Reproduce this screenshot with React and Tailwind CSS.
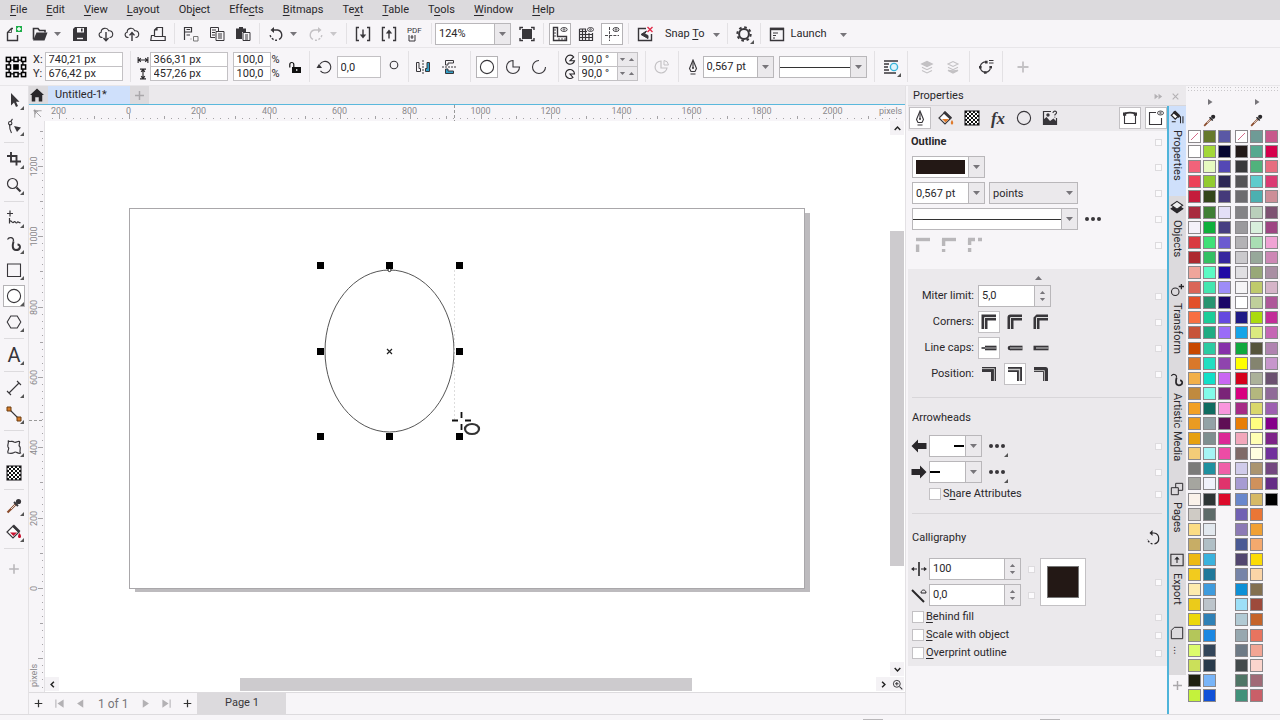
import { Fragment } from "react";
import clsx from "clsx";

const MENUS = [
  "_File", "_Edit", "_View", "_Layout", "Ob_ject", "Effe_cts",
  "_Bitmaps", "Te_xt", "_Table", "T_ools", "_Window", "_Help",
];

const PALETTE_ONE = [
  ["none", "#ffffff", "#f2637a", "#ec4258", "#c41c3b", "#a82c3e", "#f4f1f9", "#d93a40", "#ad2a30", "#efa59b", "#da6558", "#e2502a", "#f86f42", "#c7543a", "#c84800", "#d9782a", "#f2b04a", "#c08a3e", "#f2a024", "#e99b22", "#e6a010", "#f3cc78", "#7b7b7a", "#a5a59f", "#faf2ea", "#cfcbc5", "#fbdc85", "#c7ad66", "#edb913", "#f2cb1e", "#fdebae", "#ebcb1a", "#ecd80a", "#b4c65a", "#dcfb6c", "#cbe05a", "#1f2010", "#c4f23c"],
  ["#66792c", "#a3d739", "#e6fbc0", "#92cb30", "#33461a", "#3f7f35", "#0faf3c", "#3fe078", "#33c063", "#5cfac4", "#43e6b0", "#279470", "#1bcd98", "#20ab83", "#2bcba2", "#22dec2", "#13dfc8", "#82fbea", "#0f6b60", "#93a2a6", "#7f8f90", "#a6f5f5", "#1f909f", "#f0f2fb", "#2d3535", "#5d6b69", "#e2e8ee", "#b0bfc6", "#3bb2dd", "#20789a", "#3f9bdd", "#bcc4cb", "#2f80b6", "#1b87e2", "#33455a", "#293a4c", "#78b4f8", "#1050d8"],
  ["#5a58a5", "#040430", "#5448b5", "#2d2755", "#453a7a", "#e3dff6", "#463e82", "#6b5bd0", "#36279f", "#1f0ba5", "#9d8cf7", "#1b0668", "#6448e0", "#9a6cf7", "#8730aa", "#8f44ae", "#c966f2", "#7a2478", "#f996dd", "#5f0f55", "#dc2896", "#ec4ca5", "#f05fa8", "#e0336c", "#dc0a2a"],
];

const PALETTE_TWO = [
  ["none", "#231a19", "#39393b", "#555457", "#6d6c6f", "#848386", "#9b9a9d", "#b3b2b5", "#cac9cc", "#e0dfe2", "#f5f4f6", "#ffffff", "#1f1a85", "#14a4e8", "#10a83e", "#ffff00", "#d5001c", "#d8007f", "#a62a86", "#e87e06", "#f2a7bb", "#7f6a68", "#d0cbea", "#a69bd2", "#6987cc", "#7161b3", "#8c7ab5", "#4a5a94", "#52466f", "#7684a8", "#0e90d6", "#9ddff7", "#b2cad4", "#97a8b0", "#6e7a86", "#434a4c", "#4f7566", "#41917a"],
  ["#6f9b96", "#55a98f", "#51b27c", "#5fcbcc", "#4cb0b0", "#b9cfbb", "#d8efdc", "#a9deb3", "#97a89a", "#98a878", "#bfca6c", "#bfcf9b", "#aadb0f", "#dbea7f", "#56543c", "#84846f", "#acb19a", "#b4b77e", "#d9d76b", "#ffff80", "#ffffb3", "#ffffe0", "#aa9470", "#cf915c", "#d6b965", "#ea7636", "#f0a033", "#f4a96e", "#fbdb06", "#fbd5a7", "#837050", "#9d4a3b", "#c4642a", "#e8745f", "#f2a594", "#fbd5cd", "#a06a76", "#c95f68"],
  ["#c8588c", "#d5004c", "#e76d80", "#da3a73", "#cd8e98", "#7d5272", "#9e4482", "#efa2d4", "#cd87b5", "#a98ea3", "#d5b4c8", "#ae5799", "#c22d98", "#c566b4", "#b083b0", "#c796cc", "#6b5070", "#8f6a98", "#9d5fb0", "#85008a", "#7d2288", "#71309c", "#734680", "#642c85", "#000000"],
];

const checker = [];
for (let y = 0; y < 7; y++) {
  for (let x = 0; x < 7; x++) {
    if ((x + y) % 2 === 0) checker.push([x * 2 + 1, y * 2 + 1]);
  }
}

// All glyphs are drawn on a 16 x 16 box
const GLYPHS = {
  newDoc: (
    <>
      <path d="M7 2.5H5.5L1.5 6.5V14.5H11.5V9" />
      <path d="M5.5 3V6.5H2" strokeWidth="0.8" />
      <path d="M10 0H16V6H10Z" fill="#1fae4b" stroke="none" />
      <path d="M13 1V5M11 3H15" stroke="#fff" />
    </>
  ),
  open: (
    <>
      <path d="M1.5 13.5V2.5H6L7.5 4.5H13V6.5" strokeWidth="1.6" />
      <path d="M1 14.5L4.5 6.5H15.5L12.5 14.5Z" fill="currentColor" stroke="none" />
    </>
  ),
  save: (
    <>
      <path d="M3 1H15V15H1V3Z" fill="currentColor" stroke="none" />
      <path d="M5 2H12V6.5H5Z" fill="#f7f5f8" stroke="none" />
      <path d="M9 2.5H10.6V5.5H9Z" fill="currentColor" stroke="none" />
      <path d="M5 12.5H11" stroke="#f7f5f8" />
    </>
  ),
  cloudDown: (
    <>
      <path d="M4.5 11.5C0.5 11.5 0 6.8 3.2 6.3C3 1.8 9 .8 10.8 4.8C15.5 4 16.3 11.5 11.5 11.5" strokeWidth="1.1" />
      <path d="M8 6V14.5M5.5 12L8 14.8L10.5 12" />
    </>
  ),
  cloudUp: (
    <>
      <path d="M4.5 11.5C0.5 11.5 0 6.8 3.2 6.3C3 1.8 9 .8 10.8 4.8C15.5 4 16.3 11.5 11.5 11.5" strokeWidth="1.1" />
      <path d="M8 15V7M5.5 9.4L8 6.6L10.5 9.4" />
    </>
  ),
  print: <path d="M4.5 10.5V4L7 1.5H12.5V10.5M4.5 9.5H1.5L.8 14.5H15.2V10.5H4.5M7 1.5V4H4.5" strokeWidth="1.2" />,
  cut: (
    <>
      <path d="M1.5 14V1.5H8.5V6H1.5M3.5 3.5H7M3.5 9H7" strokeWidth="1.2" />
      <path d="M10.5 10.5H15V15H10.5ZM7.5 13H8.5" strokeWidth="1" stroke="#777" />
    </>
  ),
  copy: (
    <>
      <path d="M1.5 1.5H9.5V5M1.5 1.5V11.5H6M3 4H7M3 6.5H6M3 9H6" strokeWidth="1" />
      <path d="M7 5.5H15V14.5H7ZM9 8H13M9 10H13M9 12H13" strokeWidth="1" />
    </>
  ),
  paste: (
    <>
      <path d="M1 2.5H4V1H8V2.5H11V6H7V13H1Z" fill="currentColor" stroke="none" />
      <path d="M8 6.5H15V14.5H8ZM10 9H13M10 11H13M10 13H13" strokeWidth="1" />
    </>
  ),
  undo: (
    <>
      <path d="M4 4H9.5A5 5 0 0 1 11 13.4" />
      <path d="M9 14.2A6.5 6.5 0 0 1 2 8.5" strokeDasharray="2 1.5" />
      <path d="M6 1L2.5 4L6 7Z" fill="currentColor" stroke="none" />
    </>
  ),
  redo: (
    <>
      <path d="M12 4H6.5A5 5 0 0 0 5 13.4" />
      <path d="M7 14.2A6.5 6.5 0 0 0 14 8.5" strokeDasharray="2 1.5" />
      <path d="M10 1L13.5 4L10 7Z" fill="currentColor" stroke="none" />
    </>
  ),
  importIn: (
    <>
      <path d="M4 1.5H1.5V14.5H4M12 1.5H14.5V14.5H12M8 3.5V10" />
      <path d="M4.8 8.5H11.2L8 12.5Z" fill="currentColor" stroke="none" />
    </>
  ),
  exportOut: (
    <>
      <path d="M4 1.5H1.5V14.5H4M12 1.5H14.5V14.5H12M8 12.5V6" />
      <path d="M4.8 7.5H11.2L8 3.5Z" fill="currentColor" stroke="none" />
    </>
  ),
  pdf: (
    <>
      <text x="0" y="7" fontSize="8" fill="currentColor" stroke="none">PDF</text>
      <path d="M2 9V15H8V9M5 9V13M3.5 11H6.5" strokeWidth="1" />
    </>
  ),
  fullScreen: (
    <>
      <path d="M3 3H13V13H3Z" fill="currentColor" stroke="none" />
      <path d="M1 4V1.5H4M12 1.5H15V4M1 12V14.5H4M12 14.5H15V12" />
    </>
  ),
  rulers: (
    <>
      <path d="M1.5 1.5H5.5V10.5H14.5V14.5H1.5Z" />
      <path d="M2 4H4M2 7H4M2 10H4M7 14V12M10 14V12M13 14V12" strokeWidth="0.9" />
      <ellipse cx="12" cy="3.5" rx="3.2" ry="2" strokeWidth="0.9" />
      <circle cx="12" cy="3.5" r="0.8" strokeWidth="0.8" />
    </>
  ),
  grid: (
    <>
      <path d="M1.5 3V14.5H14.5V7M1.5 3H8M1.5 5.5H9M1.5 8.5H14.5M1.5 11.5H14.5M4.5 3V14.5M7.5 3V14.5M11 7V14.5" strokeWidth="1.2" />
      <ellipse cx="12.5" cy="3.5" rx="3" ry="2" strokeWidth="0.9" />
      <circle cx="12.5" cy="3.5" r="0.8" strokeWidth="0.8" />
    </>
  ),
  guides: (
    <>
      <path d="M5.5 1V15M1 9.5H15" strokeWidth="0.9" strokeDasharray="3 1.2" />
      <ellipse cx="12" cy="3.5" rx="3" ry="2" strokeWidth="0.9" />
      <circle cx="12" cy="3.5" r="0.8" strokeWidth="0.8" />
    </>
  ),
  snapOff: (
    <>
      <path d="M9 2.5H1.5V14.5H14.5V8" />
      <path d="M9.5 5L4 8.5L11 12.5V9.5L7.5 8Z" fill="currentColor" strokeWidth="1" />
      <path d="M10.5 1L15.5 6M15.5 1L10.5 6" stroke="#e02c4a" />
    </>
  ),
  gear: (
    <>
      <circle cx="8" cy="8" r="4.9" strokeWidth="2" />
      <circle cx="8" cy="8" r="6.7" strokeWidth="2" strokeDasharray="2.6 2.66" />
    </>
  ),
  launch: (
    <>
      <path d="M1.5 2.5H14.5V14.5H1.5Z" />
      <path d="M1 3H15" strokeWidth="2.4" />
      <path d="M4 7H9M4 9.5H7M4 12H6" strokeWidth="1" />
    </>
  ),
  origin: (
    <>
      <path d="M3 3H13V13H3Z" strokeWidth="1" />
      <g fill="#f7f5f8" strokeWidth="1.1">
        {[1, 6.5, 12].map((y) =>
          [1, 6.5, 12].map((x) => (
            <rect key={`${x}-${y}`} x={x} y={y} width="3" height="3" fill={x === 6.5 && y === 6.5 ? "#000" : undefined} />
          ))
        )}
      </g>
    </>
  ),
  unlock: (
    <>
      <path d="M5 8H14V14H5Z" fill="#111" stroke="none" />
      <path d="M2.8 8.5V5.5A2 2 0 0 1 6.8 5.5V8" stroke="#111" strokeWidth="1.2" />
      <path d="M9 11H10.4" stroke="#fff" />
    </>
  ),
  rotate: (
    <>
      <path d="M4 5.2A5.8 5.8 0 1 1 4.5 11.8" strokeWidth="1.1" />
      <path d="M.5 9H6L3 4.8Z" fill="currentColor" stroke="none" />
    </>
  ),
  degree: <circle cx="8" cy="6" r="3.8" strokeWidth="1.1" />,
  mirrorH: (
    <>
      <path d="M1.5 3.5V12.5H5.5V9.5H4V3.5Z" strokeWidth="1" />
      <path d="M14.5 3.5V12.5H10.5V9.5H12V3.5Z" fill="#35a0c8" strokeWidth="1" />
      <path d="M8 1V15" strokeWidth="1" strokeDasharray="2 1" />
    </>
  ),
  mirrorV: (
    <>
      <path d="M12.5 1.5H4.5V6H7V4H12.5Z" strokeWidth="1" />
      <path d="M12.5 14.5H4.5V10H7V12H12.5Z" fill="#35a0c8" strokeWidth="1" />
      <path d="M1 8H15" strokeWidth="1" strokeDasharray="2 1" />
    </>
  ),
  circle: <circle cx="8" cy="8" r="6.6" strokeWidth="1.1" />,
  pie: <path d="M8 1.5A6.5 6.5 0 1 0 14.5 8H8Z" strokeWidth="1.1" />,
  arc: <path d="M8 1.5A6.5 6.5 0 1 0 14.5 8" strokeWidth="1.1" />,
  pieStart: <path d="M13 4A6 6 0 1 0 14 9H8Z" strokeWidth="1.5" />,
  pieEnd: <path d="M14 8A6 6 0 1 0 12 12.5L8 8Z" strokeWidth="1.5" />,
  swap: (
    <>
      <path d="M7 2A6 6 0 1 0 13 9H7Z" strokeWidth="1.2" />
      <path d="M10 1.5A5 5 0 0 1 14.5 6H10Z" strokeWidth="1" />
    </>
  ),
  nib: (
    <>
      <path d="M8 1L11.5 9.5L10 12.5H6L4.5 9.5Z" strokeWidth="1.1" />
      <path d="M8 2V9M5.5 15H10.5" strokeWidth="1.1" />
      <circle cx="8" cy="9" r="1" fill="currentColor" stroke="none" />
    </>
  ),
  wrap: (
    <>
      <path d="M1 2H15M1 5H6M1 8H5M1 11H6M1 14H13" strokeWidth="1.3" />
      <circle cx="11" cy="8" r="3.6" stroke="#39b4da" fill="#dff4fb" />
    </>
  ),
  toFront: (
    <>
      <path d="M3 5L8 2.5L13 5L8 7.5Z" fill="currentColor" />
      <path d="M3 8.2L8 10.7L13 8.2M3 11.4L8 13.9L13 11.4" strokeWidth="1.1" />
    </>
  ),
  toBack: (
    <>
      <path d="M3 5L8 2.5L13 5L8 7.5ZM3 8.2L8 10.7L13 8.2" strokeWidth="1.1" />
      <path d="M3 11.4L8 12L13 11.4L8 13.9Z" fill="currentColor" />
    </>
  ),
  toCurves: (
    <>
      <path d="M8.5 3A5.2 5.2 0 1 0 12.4 9.6" strokeWidth="1.2" />
      <path d="M7 1.8H9.6V4.4H7ZM1 7H3.6V9.6H1ZM6 12.2H8.6V14.8H6ZM11.4 7H14V9.6H11.4Z" fill="currentColor" stroke="none" />
      <path d="M11 1.5H15.5M11 4H15.5" strokeWidth="1" />
    </>
  ),
  plus: <path d="M8 2.5V13.5M2.5 8H13.5" strokeWidth="1.8" />,
  pick: <path d="M5 1V13.5L8 10.5L10 15L12 14L10 9.8H13.5Z" fill="currentColor" stroke="none" />,
  shape: (
    <>
      <path d="M6.5 1C2.5 5 3 10 5.5 15" strokeWidth="1.1" />
      <circle cx="4.2" cy="5.2" r="1.7" strokeWidth="1.1" fill="#f7f5f8" />
      <path d="M8 8L15 9.5L11 14Z" fill="currentColor" stroke="none" />
    </>
  ),
  crop: <path d="M1 5H10.5V14.5M5 1V10.5H15" strokeWidth="1.9" />,
  zoom: (
    <>
      <circle cx="6.5" cy="6.5" r="5" strokeWidth="1.2" />
      <path d="M10.5 10.5L14.5 14.5" strokeWidth="2.2" />
    </>
  ),
  freehand: <path d="M4 .5V6.5M1 3.5H7M3.5 8V13.5M3.5 11C6 10 6 14 8 12C9 10 10 15 11.5 12C12.5 11 13 13.5 14.5 12.5" strokeWidth="1.2" />,
  artistic: (
    <>
      <path d="M1.5 3.5C3 .5 8 1 7.5 5.5" strokeWidth="1.2" />
      <path d="M7.5 5.5C6.5 9 6 14 10 14C15 14 15 8.5 11.5 8.5" strokeWidth="2" />
    </>
  ),
  rect: <path d="M1.5 2H14.5V14.5H1.5Z" strokeWidth="1.1" />,
  polygon: <path d="M4.8 2H11.2L14.8 8L11.2 14H4.8L1.2 8Z" strokeWidth="1.1" />,
  dimension: <path d="M3 13L13 3M1 11L5 15M11 1L15 5" strokeWidth="1.1" />,
  connector: (
    <>
      <path d="M3 3L13 13" strokeWidth="1.1" />
      <path d="M1 1H5V5H1ZM11 11H15V15H11Z" fill="#d77c28" stroke="#6b3c12" strokeWidth="1" />
    </>
  ),
  envelope: (
    <path d="M2 1.5C4 4 6 1 8 3C10 4.5 12 1.5 13.5 2.5C14.5 4 11.5 6 14 8C15 10 13 12 14.5 14C12 15.5 10 11.5 8 13.5C6 15 4 14.5 2 14C.8 11 4.5 10 2 8C1 5 3.5 4 2 1.5Z" strokeWidth="1.2" />
  ),
  checker: (
    <>
      <rect x="1" y="1" width="14" height="14" fill="#fff" strokeWidth="1.2" />
      {checker.map(([x, y]) => (
        <rect key={`${x}-${y}`} x={x} y={y} width="2" height="2" fill="#111" stroke="none" />
      ))}
    </>
  ),
  dropper: (
    <>
      <path d="M10 6L3.5 12.5L1.5 14.5" stroke="#8a4a2a" strokeWidth="2.2" />
      <path d="M9.5 6.5L5 11" stroke="#ddd" strokeWidth="1" />
      <path d="M8 4L12 8" strokeWidth="2" />
      <circle cx="12.5" cy="3.5" r="2.6" fill="currentColor" stroke="none" />
    </>
  ),
  smartFill: (
    <>
      <path d="M7 2L13 8L7 14L1 8Z" strokeWidth="1.2" fill="#fff" />
      <path d="M7 1.5L13.5 8" strokeWidth="2.6" />
      <path d="M4 8.5H11L7.5 12Z" fill="#c8102e" stroke="none" />
      <path d="M13.5 9C15.5 11.5 15.5 14 13.5 14C11.5 14 11.5 11.5 13.5 9Z" fill="#c8102e" stroke="none" />
    </>
  ),
  fill: (
    <>
      <path d="M7 2L13 8L7 14L1 8Z" strokeWidth="1.2" fill="#fff" />
      <path d="M6 2L13 8.5" strokeWidth="2.8" />
      <path d="M4 9H11L7.5 12.5Z" fill="#e07b2c" stroke="none" />
      <path d="M14 10C15.6 12 15.6 14.5 14 14.5C12.4 14.5 12.4 12 14 10Z" fill="#e07b2c" stroke="none" />
    </>
  ),
  bitmap: (
    <>
      <path d="M9 1.5H1.5V14.5H14.5V8" strokeWidth="1.2" />
      <path d="M1 15V10L4.5 7L8 11L11.5 8.5L15 12V15Z" fill="currentColor" stroke="none" />
      <circle cx="6" cy="5" r="1" fill="currentColor" />
      <path d="M11 3C11 .5 15 .5 14.5 3C14.3 4.2 12.8 4 12.8 5.5M12.8 6.7V7.5" strokeWidth="1.1" />
    </>
  ),
  frame: (
    <>
      <path d="M2.5 5V13.5H13.5V5" strokeWidth="1.1" />
      <path d="M3 3.4C5.5 2.6 10.5 2.6 13 3.4" strokeWidth="1.8" />
      <path d="M1 2.5H4.2V5.7H1ZM11.8 2.5H15V5.7H11.8Z" fill="currentColor" stroke="none" />
    </>
  ),
  autoView: (
    <>
      <path d="M8 2.5H1.5V14.5H13.5V8" strokeWidth="1.1" />
      <ellipse cx="12.5" cy="3" rx="3" ry="2" strokeWidth="0.9" />
      <circle cx="12.5" cy="3" r="0.8" strokeWidth="0.8" />
    </>
  ),
  ghostA: (
    <>
      <path d="M1 2.5H15" strokeWidth="3.4" />
      <path d="M2.6 7.5V15" strokeWidth="3.4" />
    </>
  ),
  ghostB: (
    <>
      <path d="M1 2.5H15" strokeWidth="3.4" />
      <path d="M2.6 2V9M2.6 12V15" strokeWidth="3.4" />
    </>
  ),
  ghostC: (
    <>
      <path d="M1 2.5H8M11 2.5H15" strokeWidth="3.4" />
      <path d="M2.6 2V8M2.6 11V15" strokeWidth="3.4" />
    </>
  ),
  cornerMiter: (
    <>
      <path d="M3.5 15V3.5H15" strokeWidth="6" />
      <path d="M3.5 15V3.5H15" stroke="#ddd" strokeWidth="1" />
    </>
  ),
  cornerRound: (
    <>
      <path d="M3.5 15V3.5H15" strokeWidth="6" strokeLinejoin="round" />
      <path d="M3.5 15V3.5H15" stroke="#ddd" strokeWidth="1" />
    </>
  ),
  cornerBevel: (
    <>
      <path d="M3.5 15V3.5H15" strokeWidth="6" strokeLinejoin="bevel" />
      <path d="M3.5 15V3.5H15" stroke="#ddd" strokeWidth="1" />
    </>
  ),
  capButt: (
    <>
      <path d="M4 8H15.5" strokeWidth="4.6" />
      <path d="M.5 8H4" strokeWidth="1.6" />
      <path d="M4 8H15.5" stroke="#bbb" strokeWidth="1" />
    </>
  ),
  capRound: (
    <>
      <path d="M3 8H15.5" strokeWidth="4.6" />
      <circle cx="3" cy="8" r="2.3" fill="currentColor" stroke="none" />
      <path d="M3 8H15.5" stroke="#bbb" strokeWidth="1.2" />
    </>
  ),
  capSquare: (
    <>
      <path d="M.5 8H15.5" strokeWidth="4.6" />
      <path d="M3 8H15.5" stroke="#bbb" strokeWidth="1.2" />
    </>
  ),
  posOut: (
    <>
      <path d="M1 3.5H12.5V15" strokeWidth="5" />
      <path d="M1 2.6H13.4V15" stroke="#bbb" strokeWidth="1" />
    </>
  ),
  posCenter: (
    <>
      <path d="M1 3.5H12.5V15" strokeWidth="5" />
      <path d="M1 3.5H12.5V15" stroke="#ccc" strokeWidth="1.3" />
    </>
  ),
  posIn: (
    <>
      <path d="M1 3.5H12.5V15" strokeWidth="5" strokeLinejoin="round" />
      <path d="M1 4.6H11.4V15" stroke="#bbb" strokeWidth="1" />
    </>
  ),
  arrowLeft: <path d="M.5 8L7 1.5V5H15.5V11H7V14.5Z" fill="currentColor" stroke="none" />,
  arrowRight: <path d="M15.5 8L9 1.5V5H.5V11H9V14.5Z" fill="currentColor" stroke="none" />,
  stretch: (
    <>
      <path d="M8 1V15" strokeWidth="1.6" />
      <path d="M1 8H6M10 8H15M3 6.5L1 8L3 9.5M13 6.5L15 8L13 9.5" strokeWidth="1.1" />
    </>
  ),
  nibAngle: (
    <>
      <path d="M1 3L13 15" strokeWidth="2" />
      <path d="M10 6C10 2 15 2 15 6H10" strokeWidth="1" />
    </>
  ),
  resetNib: (
    <>
      <path d="M7 3H9A5.5 5.5 0 0 1 9.5 13.8" strokeWidth="1.2" />
      <path d="M7.5 13.8A6 6 0 0 1 2.5 9" strokeWidth="1.2" strokeDasharray="2 1.5" />
      <path d="M7.5 0L4.5 3L7.5 6Z" fill="currentColor" stroke="none" />
    </>
  ),
  propsDocker: (
    <>
      <path d="M6 1.5L10.5 6L6 10.5L1.5 6Z" fill="#fff" />
      <path d="M4 2L11 8" strokeWidth="2.8" />
      <path d="M2 13.5L6.5 13.5M12 7V15M14.8 7V15" strokeWidth="1.2" />
    </>
  ),
  layers: (
    <>
      <path d="M8 5.5L14.5 10L8 14.5L1.5 10Z" fill="currentColor" />
      <path d="M8 1.5L14.5 6L8 10.5L1.5 6Z" fill="#eee" strokeWidth="1.2" />
    </>
  ),
  transform: (
    <>
      <circle cx="6" cy="10" r="4.3" strokeWidth="1.2" />
      <path d="M13 1V7M10 4H16" strokeWidth="1.5" />
    </>
  ),
  pages: (
    <>
      <path d="M6.5 1.5H14.5V9.5H6.5Z" strokeWidth="1.1" />
      <path d="M1.5 6.5H9.5V14.5H1.5Z" fill="#dcdadd" strokeWidth="1.1" />
    </>
  ),
  exportDocker: (
    <>
      <path d="M1 4V1.5H15V4M1 12V14.5H15V12M1 3V13M15 3V13M8 11.5V6" strokeWidth="1.2" />
      <path d="M5 7.5H11L8 4Z" fill="currentColor" stroke="none" />
    </>
  ),
  page: <path d="M5 1.5H14.5V14.5H1.5V5Z" strokeWidth="1.1" />,
  widthArrows: <path d="M1.5 4V12M14.5 4V12M2 8H14M5 5.5L2.5 8L5 10.5M11 5.5L13.5 8L11 10.5" strokeWidth="1.5" />,
  heightArrows: <path d="M4 1.5H12M4 14.5H12M8 2V14M5.5 5L8 2.5L10.5 5M5.5 11L8 13.5L10.5 11" strokeWidth="1.5" />,
  home: <path d="M8 .5L16 8H14V15.5H10V10.5H6V15.5H2V8H0Z" fill="currentColor" stroke="none" />,
  rulerOrigin: <path d="M2 4H14M4 2V14M4 4L13 13M5 9L4.5 4.5L9 5" strokeWidth="1.1" />,
  magnifier: (
    <>
      <circle cx="7" cy="7" r="5" strokeWidth="1.4" />
      <path d="M7 4.5V9.5M4.5 7H9.5M11 11L15 15" strokeWidth="1.5" />
    </>
  ),
  left: <path d="M10.5 3L5.5 8L10.5 13" strokeWidth="2.6" />,
  right: <path d="M5.5 3L10.5 8L5.5 13" strokeWidth="2.6" />,
  up: <path d="M3 10.5L8 5.5L13 10.5" strokeWidth="2.6" />,
  down: <path d="M3 5.5L8 10.5L13 5.5" strokeWidth="2.6" />,
  first: <path d="M14 2V14L5 8ZM2 2H3.5V14H2Z" fill="currentColor" stroke="none" />,
  prev: <path d="M12 2V14L3 8Z" fill="currentColor" stroke="none" />,
  next: <path d="M4 2V14L13 8Z" fill="currentColor" stroke="none" />,
  last: <path d="M2 2V14L11 8ZM12.5 2H14V14H12.5Z" fill="currentColor" stroke="none" />,
  collapse: <path d="M1 3L7.5 8L1 13ZM8 3L14.5 8L8 13Z" fill="currentColor" stroke="none" />,
  close: <path d="M3 3L13 13M13 3L3 13" strokeWidth="2" />,
};

function Icon({ name, className = "size-4" }) {
  return (
    <svg viewBox="0 0 16 16" fill="none" stroke="currentColor" strokeWidth="1.4" className={clsx("shrink-0", className)} aria-hidden="true">
      {GLYPHS[name]}
    </svg>
  );
}

function Caret({ className = "text-[#77757a]" }) {
  return (
    <svg viewBox="0 0 7 4" className={clsx("h-1 w-[7px] shrink-0", className)} aria-hidden="true">
      <path d="M0 0H7L3.5 4Z" fill="currentColor" />
    </svg>
  );
}

function Flyout() {
  return (
    <svg viewBox="0 0 4 4" className="absolute right-0 bottom-0 size-1" aria-hidden="true">
      <path d="M4 0V4H0Z" fill="#555" />
    </svg>
  );
}

function Accel({ text }) {
  const at = text.indexOf("_");
  if (at < 0) return text;
  return (
    <span>
      {text.slice(0, at)}
      <u className="underline-offset-2">{text[at + 1]}</u>
      {text.slice(at + 2)}
    </span>
  );
}

function Tool({ icon, label, active, muted, flyout }) {
  return (
    <button
      type="button"
      aria-label={label || icon}
      className={clsx(
        "relative mx-[2px] flex size-[22px] shrink-0 items-center justify-center border",
        active ? "border-[#b5b3b6] bg-white" : "border-transparent",
        muted ? "text-[#c3c1c4]" : "text-[#38363a]"
      )}
    >
      <Icon name={icon} />
      {flyout && <Flyout />}
    </button>
  );
}

function DropButton({ muted, label }) {
  return (
    <button type="button" aria-label={label} className="mr-[6px] flex h-5 w-2 shrink-0 items-center justify-center">
      <Caret className={muted ? "text-[#c9c7ca]" : "text-[#77757a]"} />
    </button>
  );
}

function Divider({ tight }) {
  return <span className={clsx("w-px shrink-0 self-stretch bg-[#e3e1e4]", tight ? "mx-px" : "mx-[3px]")} />;
}

function Combo({ label, value, grey, className, children }) {
  return (
    <div className={clsx("relative flex h-[22px] shrink-0 border border-[#b9b7ba]", grey ? "bg-[#ebe9ec]" : "bg-white", className)}>
      <select aria-label={label} className="w-full appearance-none pt-[2px] pl-[3px] text-[11px] outline-none">
        <option>{value}</option>
      </select>
      {children}
      <span
        className={clsx(
          "pointer-events-none absolute inset-y-0 right-0 flex w-4 items-center justify-center",
          !grey && "border-l border-[#b9b7ba] bg-[#ebe9ec]"
        )}
      >
        <Caret />
      </span>
    </div>
  );
}

function LineSample() {
  return <span className="pointer-events-none absolute inset-x-0 top-1/2 h-px bg-[#333]" />;
}

function Spinner({ label, value, className }) {
  return (
    <div className={clsx("flex h-[22px] shrink-0 border border-[#b9b7ba] bg-white", className)}>
      <input aria-label={label} defaultValue={value} className="w-full min-w-0 flex-1 pt-px pl-[3px] outline-none" />
      <div className="flex w-4 shrink-0 flex-col justify-evenly border-l border-[#b9b7ba] bg-[#ebe9ec]">
        <button type="button" aria-label={`${label} up`} className="flex justify-center">
          <Caret className="h-[3px] w-[5px] rotate-180 text-[#77757a]" />
        </button>
        <button type="button" aria-label={`${label} down`} className="flex justify-center">
          <Caret className="h-[3px] w-[5px] text-[#77757a]" />
        </button>
      </div>
    </div>
  );
}

function Field({ label, value, className }) {
  return (
    <input
      aria-label={label}
      defaultValue={value}
      className={clsx("h-[15px] shrink-0 border border-[#c3c1c4] bg-white pt-px pl-[3px] outline-none", className)}
    />
  );
}

function AngleField({ label, value, className }) {
  return (
    <div className={clsx("flex h-[15px] w-[60px] border border-[#c3c1c4] bg-white", className)}>
      <input aria-label={label} defaultValue={value} className="w-[38px] pt-px pl-[3px] outline-none" />
      <div className="flex flex-1 items-center justify-evenly border-l border-[#c3c1c4] bg-[#ebe9ec]">
        <Caret className="h-[3px] w-[5px] text-[#77757a]" />
        <Caret className="h-[3px] w-[5px] rotate-180 text-[#77757a]" />
      </div>
    </div>
  );
}

function MenuBar() {
  return (
    <nav className="flex h-5 shrink-0 items-center gap-[19px] bg-[#dcdadd] pt-px pl-[10px]">
      {MENUS.map((m) => (
        <button key={m} type="button">
          <Accel text={m} />
        </button>
      ))}
    </nav>
  );
}

function StandardBar() {
  return (
    <div className="flex h-7 shrink-0 items-center border-b border-[#e8e6e9] py-[3px] pl-px">
      <Tool icon="newDoc" label="New" />
      <Tool icon="open" label="Open" />
      <DropButton label="Recent files" />
      <Tool icon="save" label="Save" />
      <Tool icon="cloudDown" />
      <Tool icon="cloudUp" />
      <Tool icon="print" />
      <Divider />
      <Tool icon="cut" />
      <Tool icon="copy" />
      <Tool icon="paste" />
      <Divider />
      <Tool icon="undo" />
      <DropButton label="Undo list" />
      <Tool icon="redo" muted />
      <DropButton label="Redo list" muted />
      <Divider />
      <Tool icon="importIn" label="Import" />
      <Tool icon="exportOut" label="Export" />
      <Tool icon="pdf" label="Publish to PDF" />
      <Divider />
      <Combo label="Zoom level" value="124%" className="mr-[3px] w-[76px]" />
      <Tool icon="fullScreen" />
      <Divider />
      <Tool icon="rulers" active />
      <Tool icon="grid" />
      <Tool icon="guides" active />
      <Divider />
      <Tool icon="snapOff" />
      <button type="button" className="mr-1 flex items-center gap-2 pt-[2px] pl-[7px]">
        <Accel text="Snap _To" />
        <Caret />
      </button>
      <Divider />
      <Tool icon="gear" label="Options" flyout />
      <Divider />
      <Tool icon="launch" />
      <button type="button" className="flex items-center gap-[14px] pt-[2px] pl-px">
        Launch
        <Caret />
      </button>
    </div>
  );
}

function PropertyBar() {
  return (
    <div className="flex h-[38px] shrink-0 items-center border-b border-[#e8e6e9] py-[3px] pl-[5px]">
      <Icon name="origin" className="mr-[6px] size-[22px] text-black" />
      <div className="mr-[2px] flex flex-col pt-px leading-[14px]">
        <span>X:</span>
        <span>Y:</span>
      </div>
      <div className="mr-1 flex flex-col">
        <Field label="X" value="740,21 px" className="w-[78px]" />
        <Field label="Y" value="676,42 px" className="-mt-px w-[78px]" />
      </div>
      <Divider />
      <div className="mr-px ml-[3px] flex flex-col">
        <Icon name="widthArrows" className="h-[14px] w-3" />
        <Icon name="heightArrows" className="h-[14px] w-3" />
      </div>
      <div className="mr-[5px] flex flex-col">
        <Field label="Width" value="366,31 px" className="w-[78px]" />
        <Field label="Height" value="457,26 px" className="-mt-px w-[78px]" />
      </div>
      <div className="flex flex-col">
        <Field label="Horizontal scale" value="100,0" className="w-[38px]" />
        <Field label="Vertical scale" value="100,0" className="-mt-px w-[38px]" />
      </div>
      <div className="ml-px flex w-[10px] flex-col pt-px leading-[14px]">
        <span>%</span>
        <span>%</span>
      </div>
      <Tool icon="unlock" label="Lock ratio" />
      <Divider tight />
      <Tool icon="rotate" label="Rotate" />
      <input aria-label="Angle" defaultValue="0,0" className="h-[22px] w-11 border border-[#c3c1c4] bg-white pt-px pl-[3px] outline-none" />
      <Tool icon="degree" />
      <Divider tight />
      <Tool icon="mirrorH" />
      <Tool icon="mirrorV" />
      <span className="w-[5px]" />
      <Divider />
      <Tool icon="circle" label="Ellipse" active />
      <Tool icon="pie" />
      <Tool icon="arc" />
      <span className="w-[3px]" />
      <Divider />
      <div className="mx-[2px] flex flex-col">
        <Icon name="pieStart" className="h-[14px] w-3" />
        <Icon name="pieEnd" className="h-[14px] w-3" />
      </div>
      <div className="mr-1 flex flex-col">
        <AngleField label="Start angle" value="90,0 °" />
        <AngleField label="End angle" value="90,0 °" className="-mt-px" />
      </div>
      <Divider />
      <Tool icon="swap" muted />
      <Divider />
      <Icon name="nib" className="mr-[2px] ml-[3px] size-4 text-[#38363a]" />
      <Combo label="Outline width" value="0,567 pt" className="mr-[5px] w-[71px]" />
      <Combo label="Line style" value="" className="mr-1 w-[88px]">
        <LineSample />
      </Combo>
      <Divider />
      <Tool icon="wrap" flyout />
      <Divider />
      <span className="w-[3px]" />
      <Tool icon="toFront" muted />
      <Tool icon="toBack" muted />
      <Divider />
      <Tool icon="toCurves" />
      <Divider />
      <span className="w-1" />
      <Tool icon="plus" muted />
    </div>
  );
}

const TOOLBOX = [
  ["pick", "shape"],
  ["crop", "zoom"],
  ["freehand", "artistic", "rect", "circle", "polygon"],
  ["text"],
  ["dimension", "connector"],
  ["envelope", "checker"],
  ["dropper", "smartFill"],
];

function Toolbox() {
  return (
    <aside className="flex w-[29px] shrink-0 flex-col items-center gap-1 border-r border-[#e3e1e4] pt-[3px]">
      {TOOLBOX.map((group, i) => (
        <Fragment key={i}>
          <div className="flex flex-col gap-1">
            {group.map((name) => (
              <button
                key={name}
                type="button"
                aria-label={name}
                className={clsx(
                  "relative flex size-[22px] items-center justify-center border text-[#38363a]",
                  name === "circle" ? "border-[#b5b3b6] bg-white" : "border-transparent"
                )}
              >
                {name === "text" ? <span className="text-[20px] leading-none">A</span> : <Icon name={name} />}
                {name !== "checker" && <Flyout />}
              </button>
            ))}
          </div>
          <span className="my-px h-px w-5 bg-[#dddbde]" />
        </Fragment>
      ))}
      <button type="button" aria-label="Customize" className="mt-1 p-1 text-[#b9b7ba]">
        <Icon name="plus" className="size-[14px]" />
      </button>
    </aside>
  );
}

const UNIT = 70.36;

function ticks(zero, from, to) {
  const out = [];
  const step = UNIT / 10;
  for (let i = Math.ceil((from - zero) / step); zero + i * step < to; i++) {
    out.push({ at: Math.round(zero + i * step) + 0.5, i });
  }
  return out;
}

function tickLength(i) {
  if (i % 10 === 0) return 5;
  return i % 5 === 0 ? 3 : 1;
}

function HorizontalRuler() {
  return (
    <svg className="h-4 min-w-0 flex-1" role="img" aria-label="Horizontal ruler">
      {ticks(84, 0, 856).map(({ at, i }) => (
        <g key={i}>
          <path d={`M${at} ${14 - tickLength(i)}V14`} stroke="#a5a3a6" />
          {i % 10 === 0 && i <= 100 && (
            <text x={at - 1} y="9" textAnchor="middle" fontSize="9" fill="#8b898c">
              {i < 0 ? 200 : i * 20}
            </text>
          )}
        </g>
      ))}
      <path d="M409.5 0V16" stroke="#999" strokeDasharray="3 2" />
      <text x="834" y="9" fontSize="9" fill="#8b898c">pixels</text>
    </svg>
  );
}

function VerticalRuler() {
  return (
    <svg className="w-4 shrink-0 border-r border-[#e3e1e4]" role="img" aria-label="Vertical ruler">
      {ticks(467, 5, 566).map(({ at, i }) => (
        <g key={i}>
          <path d={`M${14 - tickLength(i)} ${at}H14`} stroke="#a5a3a6" />
          {i % 10 === 0 && i <= 0 && (
            <text transform={`translate(8 ${at}) rotate(-90)`} textAnchor="middle" fontSize="9" fill="#8b898c">
              {i * -20}
            </text>
          )}
        </g>
      ))}
      <path d="M0 299.5H16" stroke="#999" strokeDasharray="3 2" />
      <text transform="translate(8 566) rotate(-90)" fontSize="9" fill="#8b898c">pixels</text>
    </svg>
  );
}

function Drawing() {
  return (
    <svg className="size-full" role="img" aria-label="Page with ellipse">
      <rect x="90" y="92" width="675" height="379" fill="#bdbbbe" />
      <rect x="84.5" y="87.5" width="675" height="380" fill="#fff" stroke="#a9a7aa" />
      <ellipse cx="344.5" cy="230" rx="64.5" ry="81" fill="none" stroke="#555" />
      <path d="M409.5 149V300" stroke="#ddd" strokeDasharray="2 2" />
      <circle cx="344.5" cy="149" r="1.6" fill="#fff" stroke="#222" />
      {[144, 230, 315].map((y) =>
        [275, 344, 414].map((x) =>
          x === 344 && y === 230 ? null : <rect key={`${x}-${y}`} x={x - 3} y={y - 3} width="7" height="7" fill="#000" />
        )
      )}
      <path d="M342 228L347 233M347 228L342 233" stroke="#222" strokeWidth="1.2" />
      <path d="M416.5 291V297M416.5 303V309M407 299.5H413M420 299.5H426" stroke="#111" strokeWidth="1.8" />
      <ellipse cx="427" cy="308" rx="7" ry="5" fill="#fff" stroke="#333" strokeWidth="2.2" />
    </svg>
  );
}

function ScrollButton({ icon }) {
  return (
    <button type="button" aria-label={`Scroll ${icon}`} className="flex size-[14px] shrink-0 items-center justify-center bg-[#f4f2f5]">
      <Icon name={icon} className="size-[9px] text-[#222]" />
    </button>
  );
}

function Workspace() {
  return (
    <main className="flex min-w-0 flex-1 flex-col border-r border-[#e3e1e4]">
      <div className="flex h-[19px] shrink-0 border-b border-[#5ab8dc] bg-[#ebe9ec]">
        <button type="button" aria-label="Welcome screen" className="flex w-[19px] items-center justify-center bg-[#dcdadd] pr-1 text-[#29272a]">
          <Icon name="home" className="size-[14px]" />
        </button>
        <button type="button" className="w-[82px] bg-[#cfe0fb] pt-px pr-4">Untitled-1*</button>
        <button type="button" aria-label="New document" className="flex w-[19px] items-center justify-center bg-[#dcdadd] text-[#a9a7aa]">
          <Icon name="plus" className="size-[13px]" />
        </button>
      </div>
      <div className="flex h-4 shrink-0">
        <div className="flex w-4 items-center justify-center text-[#8b898c]">
          <Icon name="rulerOrigin" className="size-[11px]" />
        </div>
        <HorizontalRuler />
      </div>
      <div className="flex min-h-0 flex-1">
        <VerticalRuler />
        <div className="flex min-w-0 flex-1 flex-col bg-white">
          <div className="flex min-h-0 flex-1">
            <div className="min-w-0 flex-1">
              <Drawing />
            </div>
            <div className="mr-px flex w-[14px] shrink-0 flex-col">
              <ScrollButton icon="up" />
              <span className="flex-[96]" />
              <span className="flex-[334] bg-[#cdcbce]" />
              <span className="flex-[96]" />
              <ScrollButton icon="down" />
            </div>
          </div>
          <div className="mr-px flex h-4 shrink-0 items-center">
            <ScrollButton icon="left" />
            <span className="flex-[181]" />
            <span className="h-[13px] flex-[452] bg-[#cdcbce]" />
            <span className="flex-[184]" />
            <ScrollButton icon="right" />
            <button type="button" aria-label="Navigator" className="flex size-[14px] items-center justify-center bg-[#f4f2f5] text-[#38363a]">
              <Icon name="magnifier" className="size-[11px]" />
            </button>
          </div>
        </div>
      </div>
      <div className="flex h-[22px] shrink-0 items-center gap-[10px] border-t border-[#dddbde] pl-1 text-[#b3b1b4]">
        <button type="button" aria-label="Add page before" className="text-[#333]"><Icon name="plus" className="size-[11px]" /></button>
        <button type="button" aria-label="First page"><Icon name="first" className="size-[11px]" /></button>
        <button type="button" aria-label="Previous page"><Icon name="prev" className="size-[11px]" /></button>
        <span className="px-[2px] text-[12px] text-[#77757a]">1 of 1</span>
        <button type="button" aria-label="Next page"><Icon name="next" className="size-[11px]" /></button>
        <button type="button" aria-label="Last page"><Icon name="last" className="size-[11px]" /></button>
        <button type="button" aria-label="Add page after" className="text-[#333]"><Icon name="plus" className="size-[11px]" /></button>
        <button type="button" className="-ml-[6px] w-[89px] self-stretch bg-[#dcdadd] text-[#38363a]">Page 1</button>
      </div>
    </main>
  );
}

function Flag({ label, className }) {
  return (
    <input
      type="checkbox"
      aria-label={`${label} differs`}
      className={clsx("size-[7px] shrink-0 appearance-none border border-[#dddbde] bg-[#fbfafc]", className)}
    />
  );
}

function Row({ label, className = "h-[26px]", children }) {
  return (
    <div className={clsx("flex shrink-0 items-center", className)}>
      {children}
      <Flag label={label} className="mr-[5px] ml-auto" />
    </div>
  );
}

function PanelTool({ icon, active, muted }) {
  return (
    <button
      type="button"
      aria-label={icon}
      className={clsx(
        "flex size-[22px] shrink-0 items-center justify-center border",
        active ? "border-[#c3c1c4] bg-white" : "border-transparent",
        muted ? "text-[#b9b7ba]" : "text-[#38363a]"
      )}
    >
      {icon === "fx" ? (
        <span className="font-['Liberation_Serif',serif] text-[17px] leading-none font-bold italic">fx</span>
      ) : (
        <Icon name={icon} />
      )}
    </button>
  );
}

function Dots({ flyout }) {
  return (
    <button type="button" aria-label="More" className="relative ml-[6px] flex h-[22px] w-5 items-center gap-[2px] pl-px">
      <span className="size-1 rounded-full bg-[#38363a]" />
      <span className="size-1 rounded-full bg-[#38363a]" />
      <span className="size-1 rounded-full bg-[#38363a]" />
      {flyout && <Flyout />}
    </button>
  );
}

function Check({ text }) {
  return (
    <label className="flex items-center gap-[2px]">
      <input type="checkbox" className="size-3 appearance-none border border-[#c3c1c4] bg-white" />
      <Accel text={text} />
    </label>
  );
}

const CHOICES = [
  { label: "Corners:", icons: ["cornerMiter", "cornerRound", "cornerBevel"], on: 0 },
  { label: "Line caps:", icons: ["capButt", "capRound", "capSquare"], on: 0 },
  { label: "Position:", icons: ["posOut", "posCenter", "posIn"], on: 1 },
];

function PropertiesPanel() {
  return (
    <section className="flex min-w-0 flex-1 flex-col">
      <div className="flex h-[25px] shrink-0 items-start gap-1 bg-[#ebe9ec] pt-px pl-px">
        {["nib", "fill", "checker", "fx", "circle", "bitmap"].map((name) => (
          <PanelTool key={name} icon={name} active={name === "nib"} />
        ))}
        <span className="flex-1" />
        <PanelTool icon="frame" active />
        <PanelTool icon="autoView" active />
      </div>
      <div className="flex h-[138px] shrink-0 flex-col pl-1">
        <Row label="Outline" className="h-[23px]">
          <h2 className="-ml-px font-bold">Outline</h2>
        </Row>
        <Row label="Colour">
          <div className="flex h-[22px] w-[73px] border border-[#b9b7ba] bg-white">
            <button type="button" aria-label="Outline colour" className="m-[3px] flex-1 bg-[#231815]" />
            <span className="flex w-4 items-center justify-center border-l border-[#b9b7ba] bg-[#ebe9ec]">
              <Caret />
            </span>
          </div>
        </Row>
        <Row label="Width">
          <Combo label="Width" value="0,567 pt" className="mr-1 w-[73px]" />
          <Combo label="Units" value="points" className="w-[89px]" grey />
        </Row>
        <Row label="Style">
          <Combo label="Style" value="" className="w-[166px]">
            <LineSample />
          </Combo>
          <Dots />
        </Row>
        <Row label="Dashes">
          <div className="flex gap-1">
            <PanelTool icon="ghostA" muted />
            <PanelTool icon="ghostB" muted />
            <PanelTool icon="ghostC" muted />
          </div>
        </Row>
      </div>
      <div className="flex h-[397px] shrink-0 flex-col bg-[#ebe9ec] pl-1">
        <div className="flex h-[14px] shrink-0 items-center pt-1 pl-[123px]">
          <Caret className="rotate-180 text-[#77757a]" />
        </div>
        <Row label="Miter limit">
          <span className="mr-1 w-[62px] text-right whitespace-nowrap">Miter limit:</span>
          <Spinner label="Miter limit" value="5,0" className="w-[73px]" />
        </Row>
        {CHOICES.map((c) => (
          <Row key={c.label} label={c.label}>
            <span className="mr-1 w-[62px] text-right whitespace-nowrap">{c.label}</span>
            <div className="flex gap-1">
              {c.icons.map((name, i) => (
                <PanelTool key={name} icon={name} active={i === c.on} />
              ))}
            </div>
          </Row>
        ))}
        <hr className="mt-[10px] mr-[5px] border-[#d8d6d9]" />
        <h3 className="mt-3 mb-[7px] leading-4">Arrowheads</h3>
        <Row label="Start arrow">
          <Icon name="arrowLeft" className="mr-[2px] -ml-px size-4" />
          <Combo label="Start arrow" value="" className="w-[53px]">
            <span className="absolute top-[9px] right-[17px] h-[2px] w-[10px] bg-black" />
          </Combo>
          <Dots flyout />
        </Row>
        <Row label="End arrow">
          <Icon name="arrowRight" className="mr-[2px] -ml-px size-4" />
          <Combo label="End arrow" value="" className="w-[53px]">
            <span className="absolute top-[9px] left-0 h-[2px] w-[10px] bg-black" />
          </Combo>
          <Dots flyout />
        </Row>
        <Row label="Share" className="h-[18px] pl-[17px]">
          <Check text="S_hare Attributes" />
        </Row>
        <hr className="mt-[10px] mr-[5px] border-[#d8d6d9]" />
        <div className="mt-4 mb-[10px] flex items-center justify-between pr-[6px] leading-4">
          <h3>Calligraphy</h3>
          <button type="button" aria-label="Reset nib">
            <Icon name="resetNib" />
          </button>
        </div>
        <Row label="Nib" className="h-[52px]">
          <div>
            <div className="flex h-[26px] items-center">
              <Icon name="stretch" className="mr-[2px] -ml-px size-4" />
              <Spinner label="Stretch" value="100" className="w-[92px]" />
              <Flag label="Stretch" className="ml-[7px]" />
            </div>
            <div className="flex h-[26px] items-center">
              <Icon name="nibAngle" className="mr-[2px] -ml-px size-4" />
              <Spinner label="Nib angle" value="0,0" className="w-[92px]" />
              <Flag label="Nib angle" className="ml-[7px]" />
            </div>
          </div>
          <div className="ml-[5px] border border-[#c3c1c4] bg-white px-[6px] py-[7px]">
            <div className="size-8 border border-[#777] bg-[#231815]" />
          </div>
        </Row>
        <Row label="Behind fill" className="h-[18px]"><Check text="_Behind fill" /></Row>
        <Row label="Scale" className="h-[18px]"><Check text="_Scale with object" /></Row>
        <Row label="Overprint" className="h-[18px]"><Check text="_Overprint outline" /></Row>
      </div>
    </section>
  );
}

const DOCKERS = [
  { icon: "propsDocker", label: "Properties", look: "h-[90px] bg-[#cfe0fb]" },
  { icon: "layers", label: "Objects", look: "h-[83px] bg-[#dcdadd]" },
  { icon: "transform", label: "Transform", look: "h-[90px] bg-[#dcdadd]" },
  { icon: "artistic", label: "Artistic Media", look: "h-[109px] bg-[#dcdadd]" },
  { icon: "pages", label: "Pages", look: "h-[71px] bg-[#dcdadd]" },
  { icon: "exportDocker", label: "Export", look: "h-[73px] bg-[#dcdadd]" },
  { icon: "page", label: "...", look: "h-[53px] bg-[#dcdadd]" },
];

function DockerTabs() {
  return (
    <div className="flex w-[19px] shrink-0 flex-col items-stretch border-l-2 border-[#4fb4da]">
      {DOCKERS.map((d) => (
        <button key={d.label} type="button" className={clsx("flex shrink-0 flex-col items-center gap-[6px] pt-1 pr-[2px]", d.look)}>
          <Icon name={d.icon} className="size-[14px]" />
          <span className="[writing-mode:vertical-rl]">{d.label}</span>
        </button>
      ))}
      <button type="button" aria-label="Add docker" className="flex justify-center pt-1 text-[#a9a7aa]">
        <Icon name="plus" className="size-[13px]" />
      </button>
    </div>
  );
}

function Palette({ columns }) {
  return (
    <aside className="flex w-[45px] shrink-0 flex-col items-center">
      <div className="h-[6px] w-full bg-[radial-gradient(#c9c7ca_1px,transparent_1px)] bg-size-[3px_3px]" />
      <button type="button" aria-label="Palette menu" className="flex h-[19px] items-center text-[#77757a]">
        <Icon name="next" className="size-2" />
      </button>
      <button type="button" aria-label="Pick colour" className="flex h-[18px] items-center">
        <Icon name="dropper" className="size-[13px]" />
      </button>
      <div className="mb-[11px] grid min-h-0 flex-1 grid-flow-col grid-cols-[15px_15px_15px] grid-rows-[repeat(38,minmax(0,1fr))] items-center justify-items-center">
        {columns.map((colors, c) =>
          Array.from({ length: 38 }, (_, r) => {
            const color = colors[r];
            if (!color) return <span key={`${c}-${r}`} />;
            return (
              <button
                key={`${c}-${r}`}
                type="button"
                aria-label={color}
                className="size-[13px] border border-[#8b898c]"
                style={{ backgroundColor: color === "none" ? "#fff" : color }}
              >
                {color === "none" && (
                  <svg viewBox="0 0 11 11" className="size-[11px]">
                    <path d="M2 9L9 2" stroke="#d46a8a" />
                  </svg>
                )}
              </button>
            );
          })
        )}
      </div>
    </aside>
  );
}

export default function App() {
  return (
    <div className="flex h-screen flex-col overflow-hidden bg-[#f7f5f8] font-['Roboto',sans-serif] text-[11px] text-[#29272a]">
      <MenuBar />
      <StandardBar />
      <PropertyBar />
      <div className="flex min-h-0 flex-1 pr-px">
        <Toolbox />
        <Workspace />
        <div className="ml-[2px] flex w-[278px] shrink-0 flex-col">
          <header className="flex h-5 shrink-0 items-center border-b border-[#d8d6d9] bg-[#ebe9ec] pt-[2px] pr-[6px] pl-[5px]">
            <h1 className="flex-1">Properties</h1>
            <button type="button" aria-label="Collapse" className="mr-2 text-[#b3b1b4]"><Icon name="collapse" className="size-[9px]" /></button>
            <button type="button" aria-label="Close" className="text-[#b3b1b4]"><Icon name="close" className="size-[9px]" /></button>
          </header>
          <div className="flex min-h-0 flex-1">
            <PropertiesPanel />
            <DockerTabs />
          </div>
        </div>
        <div className="ml-px flex gap-[2px]">
          <Palette columns={PALETTE_ONE} />
          <Palette columns={PALETTE_TWO} />
        </div>
      </div>
      <footer className="flex h-[6px] shrink-0 items-end border-t border-[#dddbde]">
        <span className="flex-[863]" />
        <span className="h-px w-5 bg-[#b9b7ba]" />
        <span className="flex-[157]" />
        <span className="h-px w-5 bg-[#b9b7ba]" />
        <span className="flex-[220]" />
      </footer>
    </div>
  );
}
